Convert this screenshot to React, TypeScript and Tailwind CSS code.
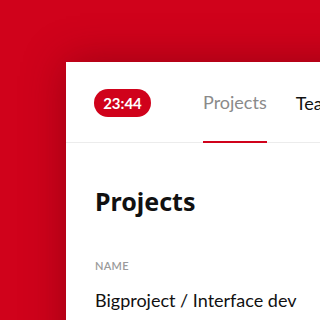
export default function App() {
  return (
    <div
      className="w-[320px] h-[320px] overflow-hidden bg-[#d0021b] pl-[66px] pt-[62px]"
      style={{ fontFamily: 'Lato, "Noto Sans", sans-serif' }}
    >
      <div className="w-[400px] h-[400px] bg-white shadow-[0_0_40px_rgba(90,0,10,0.45)]">
        {/* NAV */}
        <nav className="flex items-end h-[81px] border-b border-[#ececec] pl-[28px]">
          <div className="self-center mt-[2px] flex items-center justify-center w-[57px] h-[28px] rounded-full bg-[#d0021b] text-white text-[15px] font-bold">
            23:44
          </div>
          <div className="ml-[52px] flex flex-col h-full">
            <span className="flex-1 flex items-center pt-[2px] text-[18px] text-[#8a8a8a]">Projects</span>
            <span className="h-[2px] bg-[#d0021b] -mb-px"></span>
          </div>
          <span className="ml-[29px] self-center pt-[2px] text-[18px] text-[#111]">Teams</span>
        </nav>

        {/* CONTENT */}
        <section className="pl-[29px]">
          <h1
            className="mt-[46px] text-[25px] font-bold text-[#111] leading-none"
            style={{ fontFamily: '"Noto Sans", sans-serif' }}
          >
            Projects
          </h1>
          <p className="mt-[46px] text-[11px] font-semibold uppercase text-[#9a9a9a] leading-none tracking-wide">Name</p>
          <p className="mt-[20px] text-[18px] text-[#111] leading-none">Bigproject / Interface dev</p>
        </section>
      </div>
    </div>
  );
}
